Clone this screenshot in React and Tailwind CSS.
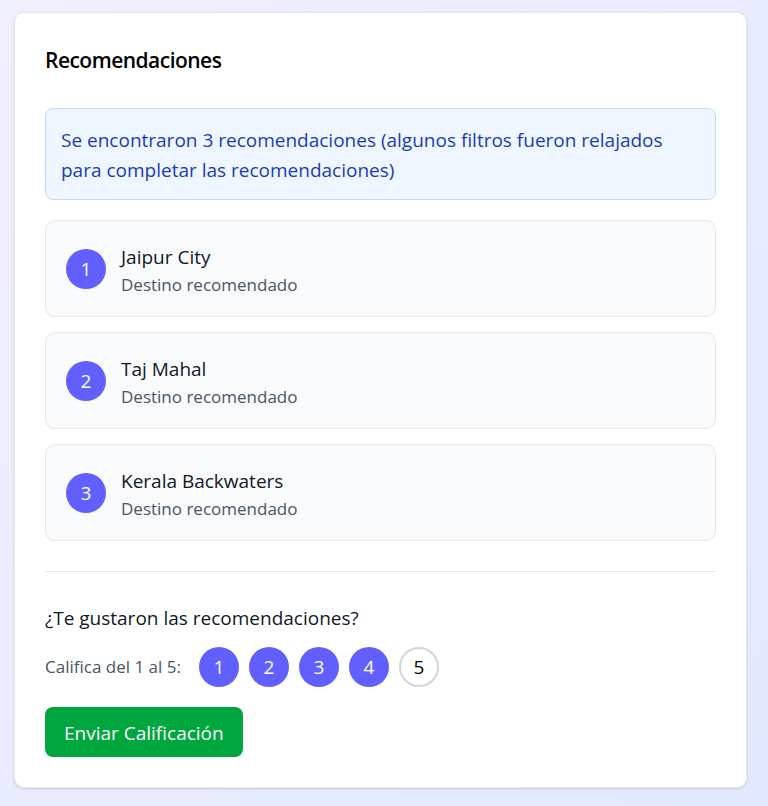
import { useState } from "react";

const destinations = ["Jaipur City", "Taj Mahal", "Kerala Backwaters"];
const scores = [1, 2, 3, 4, 5];

export default function App() {
  const [rating, setRating] = useState(4);
  return (
    <div className="min-h-screen bg-linear-to-br/srgb from-[#f0efff] to-[#e2e8ff] pt-3 pr-[21px] pb-[18px] pl-3.5 font-['Open_Sans','Noto_Sans',sans-serif] text-[19px] leading-[30px] text-black">
      <main className="rounded-[10px] border border-gray-200 bg-white p-[30px] shadow-sm">
        <h1 className="pt-0.5 pb-1.5 text-[21px] leading-[30px] font-semibold tracking-tight">Recomendaciones</h1>
        <p className="mt-[27px] rounded-lg border border-blue-200 bg-blue-50 px-[15px] pt-4 pb-3.5 text-blue-800">
          Se encontraron 3 recomendaciones (algunos filtros fueron relajados para completar las recomendaciones)
        </p>
        <ol className="mt-5 flex flex-col gap-[15px]">
          {destinations.map((name, i) => (
            <li key={name} className="flex items-center gap-[15px] rounded-[10px] border border-gray-200 bg-gray-50 p-5">
              <span className="flex size-10 shrink-0 items-center justify-center rounded-full bg-[#615fff] text-white">{i + 1}</span>
              <div>
                <h2 className="leading-[32px] text-gray-900">{name}</h2>
                <p className="text-[17px] leading-[23px] text-gray-600">Destino recomendado</p>
              </div>
            </li>
          ))}
        </ol>
        <section className="mt-[30px] border-t border-gray-200 pt-[30px]">
          <h2 className="leading-[32px] text-gray-900">¿Te gustaron las recomendaciones?</h2>
          <div className="mt-[13px] flex items-center gap-[18px]">
            <span className="text-[17px] text-gray-600">Califica del 1 al 5:</span>
            <div className="flex gap-2.5">
              {scores.map((n) => (
                <button
                  key={n}
                  type="button"
                  aria-pressed={n <= rating}
                  onClick={() => setRating(n)}
                  className={n <= rating ? "size-10 rounded-full bg-[#615fff] text-white" : "size-10 rounded-full border-2 border-gray-300 bg-white text-black"}
                >
                  {n}
                </button>
              ))}
            </div>
          </div>
          <button type="button" className="mt-5 rounded-lg bg-[#00a63e] px-[19px] pt-[11px] pb-[9px] text-white">Enviar Calificación</button>
        </section>
      </main>
    </div>
  );
}
